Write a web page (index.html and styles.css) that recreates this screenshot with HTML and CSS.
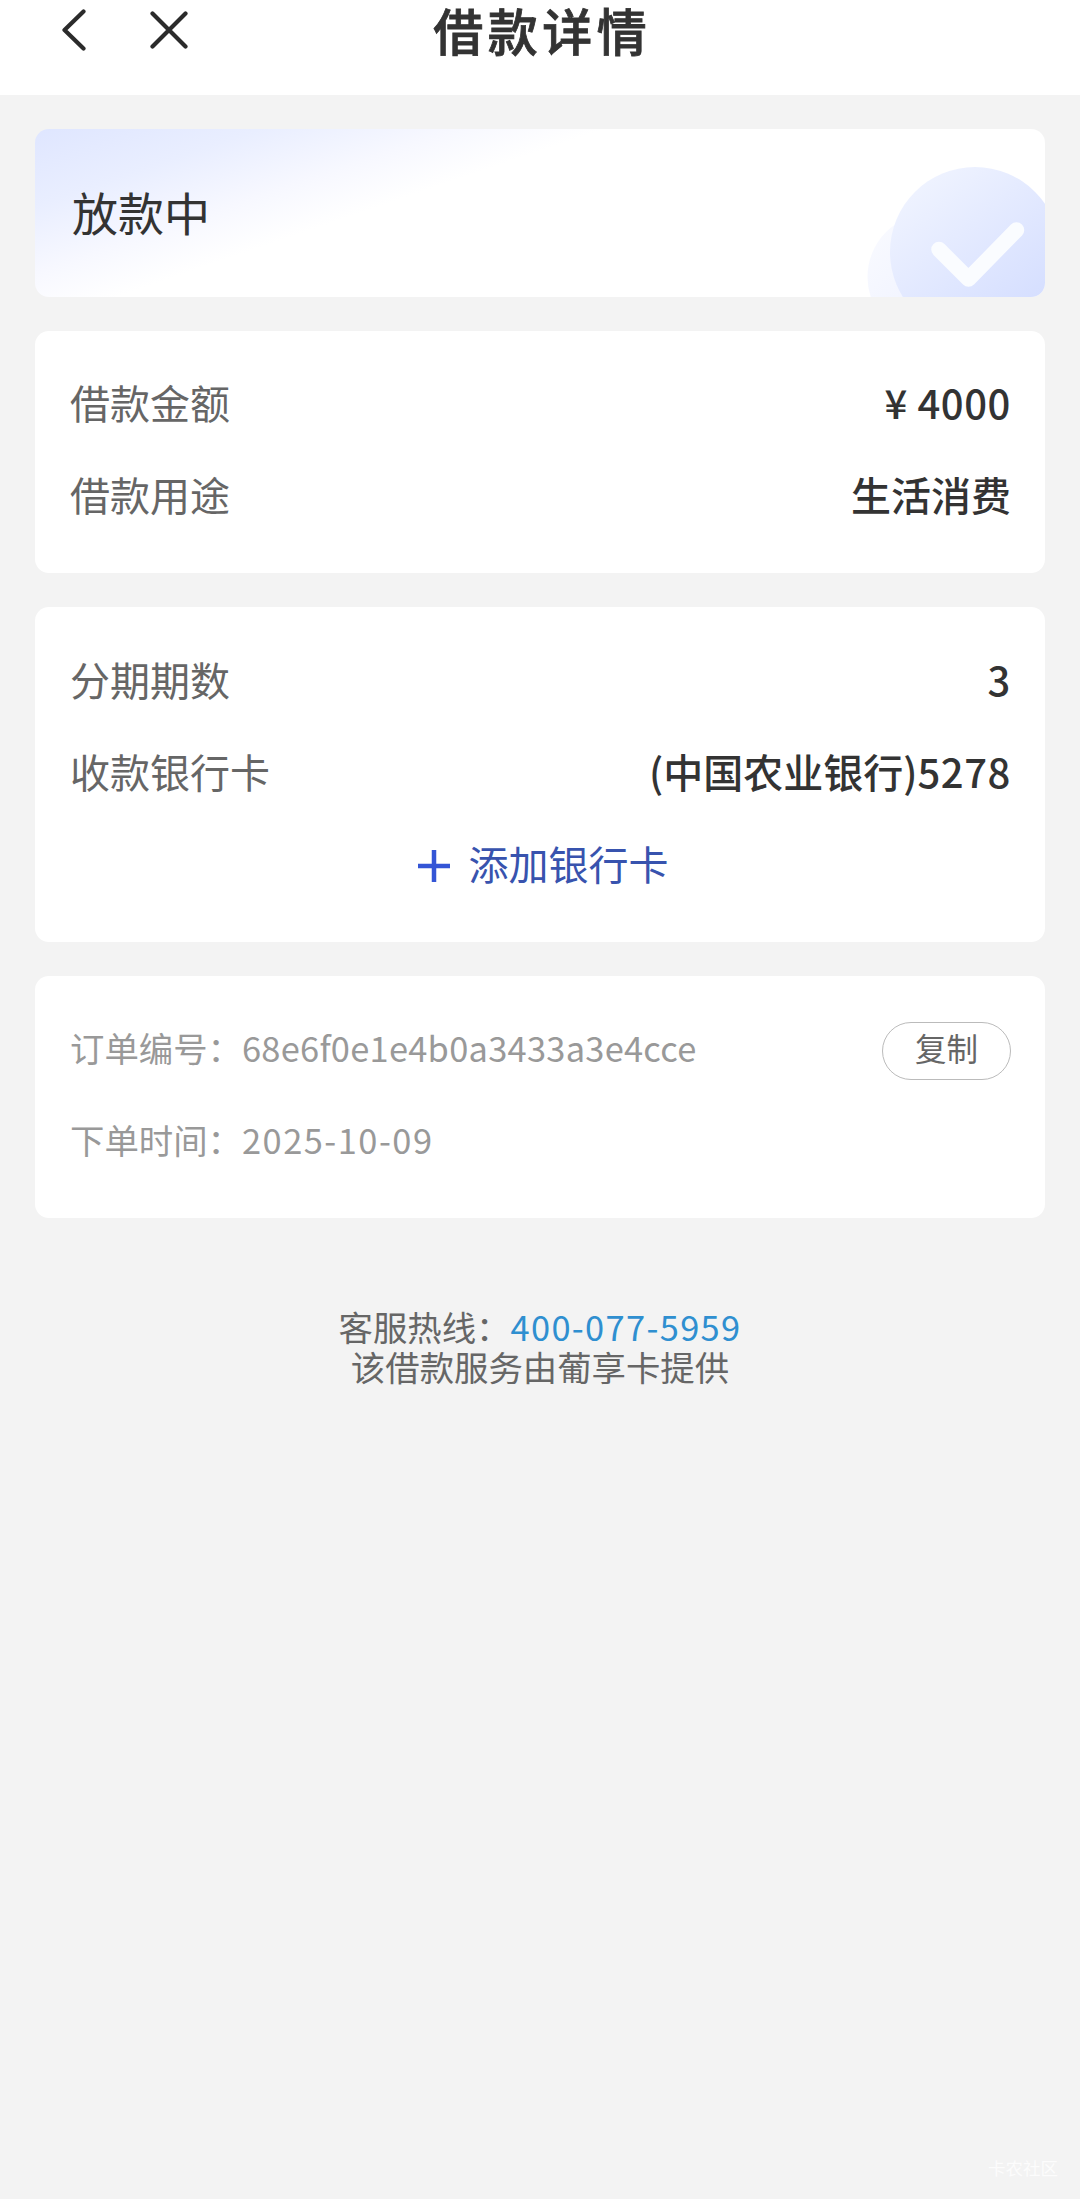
FILE: index.html
```html
<!DOCTYPE html>
<html lang="zh-CN">
<head>
  <meta charset="UTF-8" />
  <meta name="viewport" content="width=device-width, initial-scale=1.0"/>
  <title>借款详情</title>
  <link rel="stylesheet" href="styles.css">
</head>
<body>
  <header class="navbar">
    <div class="nav-icons">
      <svg class="icon-back" viewBox="0 0 24 42">
        <path d="M21.5 2.5 L2.5 21 L21.5 39.5"/>
      </svg>
      <svg class="icon-close" viewBox="0 0 38 38">
        <path d="M2.5 2.5 L35.5 35.5 M35.5 2.5 L2.5 35.5"/>
      </svg>
    </div>
    <h1>借款详情</h1>
  </header>

  <main class="container">
    <section class="status">
      <span>放款中</span>
      <svg class="status-art" viewBox="0 0 180 132">
        <defs>
          <linearGradient id="big" x1="0.15" y1="0.1" x2="0.75" y2="0.85">
            <stop offset="0" stop-color="#eff3ff"/>
            <stop offset="1" stop-color="#d6dfff"/>
          </linearGradient>
          <linearGradient id="small" x1="0" y1="0" x2="1" y2="1">
            <stop offset="0" stop-color="#fafbff"/>
            <stop offset="1" stop-color="#eaeeff"/>
          </linearGradient>
        </defs>
        <circle cx="66" cy="112" r="63.5" fill="url(#small)"/>
        <circle cx="110" cy="87" r="85" fill="url(#big)"/>
        <path class="tick" d="M74 84.5 L103.5 114 L151.5 65"/>
      </svg>
    </section>

    <section class="card">
      <div class="row">
        <span class="label">借款金额</span>
        <span class="value"><span class="yen">¥</span><span class="num">4000</span></span>
      </div>
      <div class="row">
        <span class="label">借款用途</span>
        <span class="value">生活消费</span>
      </div>
    </section>

    <section class="card">
      <div class="row">
        <span class="label">分期期数</span>
        <span class="value num">3</span>
      </div>
      <div class="row">
        <span class="label">收款银行卡</span>
        <span class="value">(中国农业银行)<span class="num">5278</span></span>
      </div>
      <div class="row add">
        <svg class="icon-plus" viewBox="0 0 32 32">
          <path d="M16 0 V32 M0 16 H32"/>
        </svg>
        <span>添加银行卡</span>
      </div>
    </section>

    <section class="card order">
      <div class="row">
        <span>订单编号：<span class="order-no">68e6f0e1e4b0a3433a3e4cce</span></span>
        <button class="copy">复制</button>
      </div>
      <div class="row">
        <span>下单时间：<span class="order-date">2025-10-09</span></span>
      </div>
    </section>
  </main>

  <footer class="footer">
    <p>客服热线：<a href="tel:400-077-5959">400-077-5959</a></p>
    <p>该借款服务由葡享卡提供</p>
  </footer>

  <div class="watermark">卡农社区</div>
</body>
</html>
```
FILE: styles.css
```css
* {
  box-sizing: border-box;
}

body {
  margin: 0;
  height: 2199px;
  display: flex;
  flex-direction: column;
  background: #f3f3f3;
  color: #333;
  font-family: "Noto Sans CJK SC", sans-serif;
}

.navbar {
  height: 95px;
  padding: 0 62px;
  background: white;
  display: grid;
  grid-template-columns: 1fr auto 1fr;
  align-items: start;
}

.nav-icons {
  display: flex;
  align-items: center;
  gap: 64px;
  height: 60px;
}

.nav-icons svg,
.icon-plus {
  fill: none;
  stroke: #2b2b2b;
  stroke-width: 4.2;
  stroke-linecap: round;
  stroke-linejoin: round;
}

.icon-back {
  width: 24px;
  height: 42px;
}

.icon-close {
  width: 38px;
  height: 38px;
}

h1 {
  margin: 0;
  font-size: 50px;
  line-height: 58px;
  letter-spacing: 4.5px;
  margin-right: -4.5px;
  font-weight: 500;
  -webkit-text-stroke: 0.8px #333;
}

.container {
  padding: 34px 35px 0;
  display: flex;
  flex-direction: column;
  gap: 34px;
}

.status {
  height: 167.5px;
  padding-left: 37px;
  border-radius: 14px;
  overflow: hidden;
  display: flex;
  justify-content: space-between;
  align-items: center;
  background: linear-gradient(161deg, #dfe6ff 0%, #e9eeff 15%, #f7f8ff 28%, white 38%);
  font-size: 46px;
}

.status span {
  padding-bottom: 3px;
}

.status-art {
  width: 180px;
  height: 132px;
  align-self: flex-end;
}

.tick {
  fill: none;
  stroke: #fafcff;
  stroke-width: 15.5;
  stroke-linecap: round;
  stroke-linejoin: round;
}

.card {
  padding: 28px 34px 30.5px 35px;
  border-radius: 14px;
  background: white;
}

.row {
  height: 92px;
  display: flex;
  justify-content: space-between;
  align-items: center;
  font-size: 40px;
  line-height: 1;
}

.row > span {
  padding-bottom: 5px;
}

.label {
  color: #666;
}

.value {
  font-weight: 500;
}

.num {
  letter-spacing: 0.6px;
}

.yen {
  margin-right: 10px;
}

.add {
  justify-content: center;
  gap: 19px;
  padding: 1px 0 0 5px;
  color: #3853ae;
}

.icon-plus {
  width: 32px;
  height: 32px;
  stroke: #3455d6;
  stroke-width: 4.5;
  stroke-linecap: butt;
}

.order .row {
  font-size: 34.4px;
  color: #999;
}

.order-no {
  letter-spacing: 0.28px;
}

.order-date {
  letter-spacing: 1.5px;
}

.copy {
  width: 129px;
  height: 58px;
  margin-top: 2px;
  padding: 0 0 6px;
  border: 1px solid #bbb;
  border-radius: 29px;
  background: white;
  color: #666;
  font-family: inherit;
  font-size: 31.5px;
  line-height: 1;
}

.footer {
  margin-top: 88px;
  text-align: center;
  font-size: 34.4px;
  line-height: 40px;
  color: #666;
}

.footer p {
  margin: 0;
}

.footer a {
  color: #2f8fd0;
  text-decoration: none;
  letter-spacing: 1.35px;
}

.watermark {
  margin: auto 22px 20px auto;
  font-size: 17.5px;
  line-height: 22px;
  color: #fcfcfc;
}
```
